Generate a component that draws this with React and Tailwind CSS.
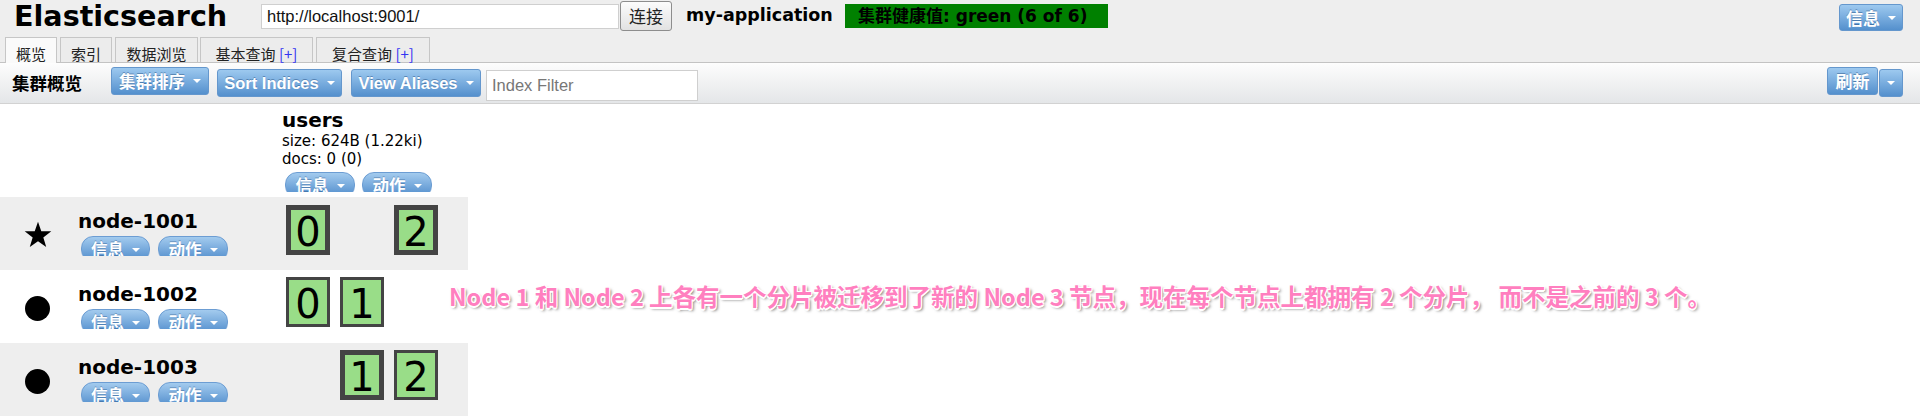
import React from "react";

const CJK = "font-['Noto_Sans_CJK_SC',sans-serif]";
const VER = "font-['DejaVu_Sans','Noto_Sans_CJK_SC',sans-serif]";
const ARIAL = "font-['Liberation_Sans','Noto_Sans_CJK_SC',sans-serif]";

function Caret({ className = "" }) {
  return (
    <span
      className={`inline-block w-0 h-0 border-l-[4px] border-r-[4px] border-t-[4px] border-l-transparent border-r-transparent border-t-white ${className}`}
    />
  );
}

function ToolBtn({ children, className = "", caret = true }) {
  return (
    <div
      className={`flex items-center justify-center gap-[8px] rounded-[3px] border border-[#6497cd] bg-linear-to-b from-[#9dc9ef] to-[#5490cd] text-white font-bold [text-shadow:0_-1px_0_rgba(0,40,90,0.35)] ${className}`}
    >
      {children}
      {caret && <Caret />}
    </div>
  );
}

function Pill({ label, className = "" }) {
  return (
    <div className={`h-[20px] overflow-hidden ${className}`}>
      <div
        className={`h-[26px] rounded-[12px] border border-[#6c9dd3] bg-linear-to-b from-[#a3cbee] to-[#4e8bcb] flex items-start justify-center gap-[8px] pt-[3px] text-white font-bold text-[16.5px] leading-[18px] ${CJK} [text-shadow:0_-1px_0_rgba(0,40,90,0.3)]`}
      >
        <span>{label}</span>
        <Caret className="mt-[8px]" />
      </div>
    </div>
  );
}

function Shard({ n, primary }) {
  if (n === null) return <div className="w-[44px] h-[50px]" />;
  return (
    <div
      className={`w-[44px] h-[50px] ${
        primary ? "border-[5px]" : "border-[3px]"
      } border-[#444444] bg-[#99dd88] flex items-center justify-center pt-[3px] text-[40px] leading-none font-['DejaVu_Sans',sans-serif] text-black`}
    >
      {n}
    </div>
  );
}

function Star() {
  return (
    <svg width="28" height="27" viewBox="0 0 28 27" className="mt-[24px]">
      <polygon
        fill="#000"
        points="14,0.7 17.29,10.17 27.31,10.37 19.33,16.43 22.23,26.03 14,20.3 5.77,26.03 8.67,16.43 0.69,10.37 10.71,10.17"
      />
    </svg>
  );
}

function Dot() {
  return <div className="mt-[26px] ml-[1px] w-[25px] h-[25px] rounded-full bg-black" />;
}

function NodeRow({ name, icon, shards, gray, shardPad }) {
  return (
    <div className={`flex h-[73px] ${gray ? "bg-[#eeeeee]" : "bg-white"}`}>
      <div className="w-[282px] flex">
        <div className="w-[78px] pl-[24px]">{icon}</div>
        <div className="pt-[13px]">
          <div className={`font-bold text-[20px] leading-[22px] text-black ${VER}`}>{name}</div>
          <div className="flex gap-[8px] mt-[4px] ml-[3px]">
            <Pill label="信息" className="w-[69px]" />
            <Pill label="动作" className="w-[70px]" />
          </div>
        </div>
      </div>
      <div className={`flex gap-[10px] pl-[4px] ${shardPad}`}>
        {shards.map((s, i) => (
          <Shard key={i} n={s ? s.n : null} primary={s ? s.p : false} />
        ))}
      </div>
    </div>
  );
}

function Tab({ children, active, className = "" }) {
  return (
    <div
      className={`h-[25px] border border-b-0 border-[#c6c6c6] flex justify-center pt-[7px] text-[15px] leading-[17px] text-[#222] ${CJK} ${
        active ? "bg-[#fafafa] h-[26px] -mb-px relative z-10" : "bg-[#ececec]"
      } ${className}`}
    >
      {children}
    </div>
  );
}

export default function App() {
  return (
    <div className="w-full h-[416px] overflow-hidden relative bg-white">
      {/* header */}
      <div className="bg-[#eeeeee]">
        <div className="h-[37px] flex items-start">
          <div className="w-[261px] pl-[14px] mt-[1px]">
            <div className={`text-[28.6px] leading-[30px] font-bold text-black ${VER}`}>Elasticsearch</div>
          </div>
          <input
            readOnly
            value="http://localhost:9001/"
            className={`mt-[4px] w-[358px] h-[25px] bg-white border border-[#cfcfcf] pl-[5px] text-[16.5px] text-[#111] outline-none ${ARIAL}`}
          />
          <button
            className={`ml-[1px] mt-[1px] w-[52px] h-[30px] rounded-[3px] border border-[#8d8d8d] bg-linear-to-b from-[#fcfcfc] to-[#e2e2e2] text-[17px] leading-[20px] text-[#222] ${CJK}`}
          >
            连接
          </button>
          <div className={`ml-[14px] mt-[5px] w-[159px] text-[17.5px] leading-[20px] font-bold text-black ${VER}`}>
            my-application
          </div>
          <div
            className={`mt-[4px] w-[263px] h-[24px] bg-[#008000] pl-[13px] flex items-center text-[17px] leading-[24px] font-bold text-black whitespace-nowrap ${VER}`}
          >
            集群健康值: green (6 of 6)
          </div>
          <ToolBtn className={`ml-auto mr-[17px] mt-[4px] w-[64px] h-[27px] text-[17px] ${CJK}`}>信息</ToolBtn>
        </div>
        {/* tabs */}
        <div className="h-[25px] flex items-end">
          <Tab active className="ml-[5px] w-[52px]">概览</Tab>
          <Tab className="ml-[3px] w-[52px]">索引</Tab>
          <Tab className="ml-[3px] w-[83px]">数据浏览</Tab>
          <Tab className="ml-[2px] w-[113px]">
            基本查询&nbsp;<span className="text-[#3434f2]">[+]</span>
          </Tab>
          <Tab className="ml-[3px] w-[114px]">
            复合查询&nbsp;<span className="text-[#3434f2]">[+]</span>
          </Tab>
        </div>
        {/* toolbar */}
        <div className="h-[42px] border-t border-b border-t-[#c3c3c3] border-b-[#d2d2d2] bg-linear-to-b from-[#fdfdfd] to-[#e4e6e8] flex items-start">
          <div className={`w-[111px] pl-[12px] h-[40px] flex items-center text-[17.5px] font-bold text-black ${CJK}`}>
            集群概览
          </div>
          <ToolBtn className={`mt-[4px] w-[98px] h-[28px] text-[16.5px] ${CJK}`}>集群排序</ToolBtn>
          <ToolBtn className={`ml-[8px] mt-[6px] w-[125px] h-[28px] text-[16.5px] ${ARIAL}`}>Sort Indices</ToolBtn>
          <ToolBtn className={`ml-[9px] mt-[6px] w-[130px] h-[28px] text-[16.5px] ${ARIAL}`}>View Aliases</ToolBtn>
          <input
            placeholder="Index Filter"
            className={`ml-[5px] mt-[7px] w-[212px] h-[31px] bg-white border border-[#cfcfcf] pl-[5px] text-[16.5px] outline-none placeholder:text-[#777777] ${ARIAL}`}
          />
          <ToolBtn caret={false} className={`ml-auto mt-[4px] w-[51px] h-[28px] text-[17px] ${CJK}`}>
            刷新
          </ToolBtn>
          <ToolBtn className="ml-[1px] mr-[17px] mt-[6px] w-[24px] h-[28px]">{null}</ToolBtn>
        </div>
      </div>

      {/* cluster table */}
      <div className="w-[468px]">
        <div className="flex h-[93px]">
          <div className="w-[282px]" />
          <div className="pt-[4px]">
            <div className={`text-[20px] leading-[24px] font-bold text-black ${VER}`}>users</div>
            <div className={`text-[15px] leading-[18px] text-black ${VER}`}>size: 624B (1.22ki)</div>
            <div className={`text-[15px] leading-[18px] text-black ${VER}`}>docs: 0 (0)</div>
            <div className="flex gap-[7px] mt-[4px] ml-[3px]">
              <Pill label="信息" className="w-[70px]" />
              <Pill label="动作" className="w-[70px]" />
            </div>
          </div>
        </div>
        <NodeRow
          gray
          name="node-1001"
          icon={<Star />}
          shardPad="pt-[8px]"
          shards={[{ n: 0, p: true }, null, { n: 2, p: true }]}
        />
        <NodeRow
          name="node-1002"
          icon={<Dot />}
          shardPad="pt-[7px]"
          shards={[{ n: 0, p: false }, { n: 1, p: false }, null]}
        />
        <NodeRow
          gray
          name="node-1003"
          icon={<Dot />}
          shardPad="pt-[7px]"
          shards={[null, { n: 1, p: true }, { n: 2, p: false }]}
        />
      </div>

      {/* annotation overlay */}
      <div
        className={`absolute left-[449px] top-[280px] whitespace-nowrap text-[23.5px] leading-[32px] font-bold text-[#ff7fbf] ${CJK} [text-shadow:-1px_-1px_0_#fff,1px_-1px_0_#fff,-1px_1px_0_#fff,1px_1px_0_#fff,0_2px_0_#fff,2px_2px_3px_rgba(0,0,0,0.55)]`}
      >
        Node 1 和 Node 2 上各有一个分片被迁移到了新的 Node 3 节点，现在每个节点上都拥有 2 个分片， 而不是之前的 3 个。
      </div>
    </div>
  );
}
